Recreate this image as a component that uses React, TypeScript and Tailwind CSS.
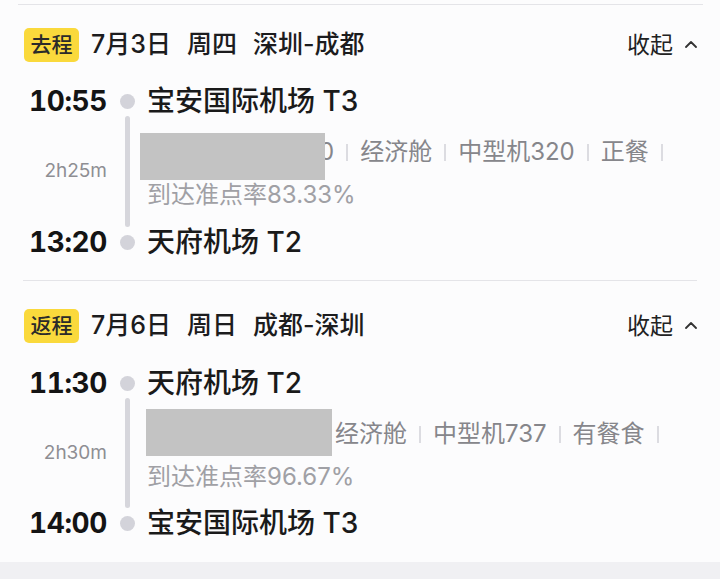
import { Fragment } from 'react';

type Trip = {
  tag: string;
  date: string;
  week: string;
  route: string;
  depTime: string;
  depPort: string;
  arrTime: string;
  arrPort: string;
  duration: string;
  details: string[];
  rate: string;
  spacer: number;
  mask: { left: number; top: number; width: number };
};

const trips: Trip[] = [
  {
    tag: '去程',
    date: '7月3日',
    week: '周四',
    route: '深圳-成都',
    depTime: '10:55',
    depPort: '宝安国际机场 T3',
    arrTime: '13:20',
    arrPort: '天府机场 T2',
    duration: '2h25m',
    details: ['0', '经济舱', '中型机320', '正餐'],
    rate: '到达准点率83.33%',
    spacer: 172,
    mask: { left: -7, top: -4, width: 185 },
  },
  {
    tag: '返程',
    date: '7月6日',
    week: '周日',
    route: '成都-深圳',
    depTime: '11:30',
    depPort: '天府机场 T2',
    arrTime: '14:00',
    arrPort: '宝安国际机场 T3',
    duration: '2h30m',
    details: ['经济舱', '中型机737', '有餐食'],
    rate: '到达准点率96.67%',
    spacer: 188,
    mask: { left: -1, top: -10, width: 186 },
  },
];

function Sep() {
  return <span className="inline-block w-[2px] h-[17px] bg-[#dcdce1] mx-[12px]" />;
}

function Dot() {
  return <span className="block w-[15px] h-[15px] rounded-full bg-[#d3d3da]" />;
}

function TripBlock({ trip, first }: { trip: Trip; first: boolean }) {
  return (
    <div className={first ? 'pt-[23px] pb-[23px]' : 'pt-[28px] pb-[24px]'}>
      <div className="flex items-center pl-[24px] pr-[23px] h-[34px]">
        <span className="h-[34px] w-[55px] rounded-[5px] bg-[#fad93c] flex items-center justify-center text-[21px] text-[#2a2a2a] font-medium">
          {trip.tag}
        </span>
        <div className="flex gap-4 ml-[12px] text-[25px] font-medium text-[#1c1c1e]">
          <span>{trip.date}</span>
          <span>{trip.week}</span>
          <span>{trip.route}</span>
        </div>
        <div className="ml-auto flex items-center gap-[12px] text-[23px] text-[#222]">
          <span>收起</span>
          <svg width="12" height="8" viewBox="0 0 12 8" fill="none" className="mt-[-2px]">
            <polyline points="1,7 6,2 11,7" stroke="#333" strokeWidth="1.8" strokeLinecap="round" strokeLinejoin="round" />
          </svg>
        </div>
      </div>

      <div className={first ? 'mt-[24px] pl-[24px]' : 'mt-[25px] pl-[24px]'}>
        <div className="flex h-[30px] items-center">
          <span className="w-[83px] text-right text-[28px] font-bold text-[#141414] tabular-nums tracking-[-0.4px]">{trip.depTime}</span>
          <span className="w-[40px] flex justify-center"><Dot /></span>
          <span className="text-[28px] font-medium text-[#1a1a1a]">{trip.depPort}</span>
        </div>

        <div className={first ? 'flex h-[111px]' : 'flex h-[110px]'}>
          <span className="w-[83px] flex items-center justify-end text-[19px] text-[#8e8e93]">{trip.duration}</span>
          <span className="w-[40px] flex justify-center">
            <span className="block w-[5px] h-full rounded-full bg-[#d6d6dc]" />
          </span>
          <div className="pt-[21px]">
            <div className="relative flex items-center h-[30px] text-[24px] text-[#86868b] whitespace-nowrap">
              <span className="inline-block shrink-0" style={{ width: trip.spacer }} />
              {trip.details.map((d) => (
                <Fragment key={d}>
                  <span>{d}</span>
                  <Sep />
                </Fragment>
              ))}
              <span
                className="absolute h-[47px] bg-[#c3c3c3]"
                style={{ left: trip.mask.left, top: trip.mask.top, width: trip.mask.width }}
              />
            </div>
            <div className="mt-[14px] h-[28px] flex items-center text-[24px] text-[#a0a0a5]">{trip.rate}</div>
          </div>
        </div>

        <div className="flex h-[30px] items-center">
          <span className="w-[83px] text-right text-[28px] font-bold text-[#141414] tabular-nums tracking-[-0.4px]">{trip.arrTime}</span>
          <span className="w-[40px] flex justify-center"><Dot /></span>
          <span className="text-[28px] font-medium text-[#1a1a1a]">{trip.arrPort}</span>
        </div>
      </div>
    </div>
  );
}

export default function App() {
  return (
    <div
      className="w-[720px] h-[579px] overflow-hidden bg-[#fcfcfd] flex flex-col"
      style={{ fontFamily: 'Inter, "Noto Sans CJK SC", sans-serif' }}
    >
      <div className="h-[4px]" />
      <div className="h-px bg-[#e4e4e8] ml-[18px] mr-[17px]" />
      <TripBlock trip={trips[0]} first />
      <div className="h-px bg-[#e4e4e8] mx-[23px]" />
      <TripBlock trip={trips[1]} first={false} />
      <div className="flex-1 bg-[#f0f0f3]" />
    </div>
  );
}
